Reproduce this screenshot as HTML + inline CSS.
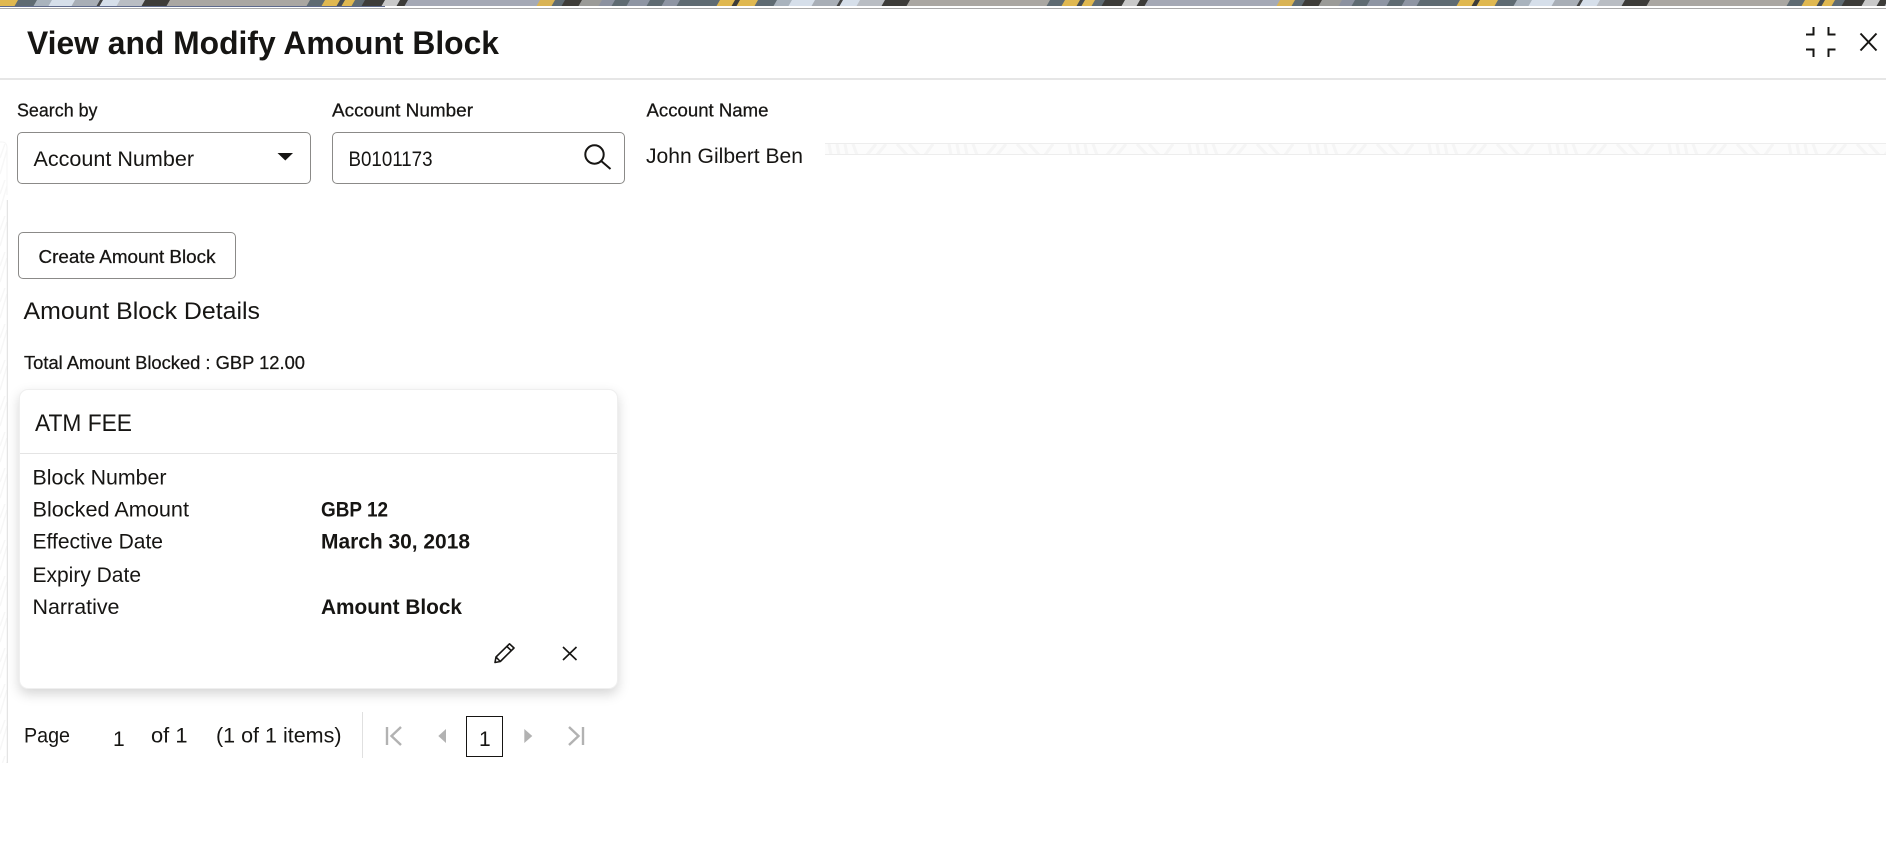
<!DOCTYPE html>
<html lang="en">
<head>
<meta charset="utf-8">
<title>View and Modify Amount Block</title>
<style>
html,body{margin:0;padding:0;background:#fff;width:1886px;height:862px;overflow:hidden}
body{position:relative;font-family:"Liberation Sans",sans-serif;color:#161513}
.box{position:absolute;box-sizing:border-box}
.field{border:1px solid #8b8a88;border-radius:5px;background:#fff}
svg.layer{position:absolute;left:0;top:0}
svg text{font-family:"Liberation Sans",sans-serif;fill:#161513}
.b{font-weight:700}
.m{stroke:#161513;stroke-width:.25}
</style>
</head>
<body>
<div class="box" style="left:0;top:6px;width:385px;height:1.4px;background:#5e6a8c"></div>
<div class="box" style="left:0;top:7.5px;width:1886px;height:1px;background:#a9a9a9"></div>
<div class="box" style="left:0;top:78px;width:1886px;height:2px;background:#e6e6e6"></div>
<div class="box field" style="left:17px;top:132px;width:294px;height:52px"></div>
<div class="box field" style="left:332px;top:132px;width:293px;height:52px"></div>
<div class="box field" style="left:18px;top:232px;width:218px;height:47px"></div>
<div class="box" style="left:18.5px;top:389px;width:599.5px;height:300px;border-radius:9px;background:#fff;border:1px solid #efefef;box-shadow:0 5px 12px rgba(0,0,0,.17)"></div>
<div class="box" style="left:19.5px;top:453px;width:597.5px;height:1px;background:#e4e4e4"></div>
<div class="box" style="left:362px;top:712px;width:1px;height:46px;background:#e0e0e0"></div>
<div class="box" style="left:466px;top:716px;width:37px;height:41px;border:1.3px solid #161513"></div>

<svg class="layer" width="1886" height="862" viewBox="0 0 1886 862" xmlns="http://www.w3.org/2000/svg">
<defs>
<pattern id="ban" patternUnits="userSpaceOnUse" width="740" height="6" patternTransform="skewX(-30)">
<rect width="740" height="6" fill="#aaa7a2"/>
<rect x="0" width="18" height="6" fill="#e0b850"/>
<rect x="18" width="19" height="6" fill="#5f6b72"/>
<rect x="37" width="15" height="6" fill="#a9b3bd"/>
<rect x="52" width="23" height="6" fill="#d6dfea"/>
<rect x="75" width="25" height="6" fill="#a8aeb6"/>
<rect x="100" width="3" height="6" fill="#444"/>
<rect x="103" width="17" height="6" fill="#d6dfea"/>
<rect x="120" width="25" height="6" fill="#b9bdc3"/>
<rect x="145" width="25" height="6" fill="#3d3c39"/>
<rect x="310" width="15" height="6" fill="#5f6b72"/>
<rect x="325" width="15" height="6" fill="#e0b850"/>
<rect x="340" width="5" height="6" fill="#4a4f52"/>
<rect x="345" width="10" height="6" fill="#e0b850"/>
<rect x="355" width="10" height="6" fill="#5f6b72"/>
<rect x="365" width="20" height="6" fill="#3d3c39"/>
<rect x="385" width="15" height="6" fill="#c9c9c9"/>
<rect x="400" width="8" height="6" fill="#3d3c39"/>
<rect x="408" width="132" height="6" fill="#a5a9b5"/>
<rect x="540" width="15" height="6" fill="#d9b354"/>
<rect x="555" width="10" height="6" fill="#5f6b72"/>
<rect x="565" width="17" height="6" fill="#3f3d39"/>
<rect x="582" width="20" height="6" fill="#9b9b98"/>
<rect x="602" width="13" height="6" fill="#8c92a0"/>
<rect x="615" width="15" height="6" fill="#5f6b72"/>
<rect x="630" width="20" height="6" fill="#8e95a3"/>
<rect x="650" width="15" height="6" fill="#5f6b72"/>
<rect x="665" width="15" height="6" fill="#8e95a3"/>
<rect x="680" width="40" height="6" fill="#5f6b72"/>
<rect x="720" width="15" height="6" fill="#e0b850"/>
<rect x="735" width="5" height="6" fill="#3d3c39"/>
</pattern>
<pattern id="strip" patternUnits="userSpaceOnUse" width="120" height="11" patternTransform="translate(825 144)">
<rect width="120" height="11" fill="#fcfcfc"/>
<path d="M4 0l2 11M12 0l2 11M20 0l2 11M28 0l4 11M42 11l9-11M52 11l9-11M72 0l10 11M84 0l10 11M100 11l8-11" stroke="#f5f5f5" stroke-width="3" fill="none"/>
</pattern>
<pattern id="side" patternUnits="userSpaceOnUse" width="7" height="36">
<path d="M0 30L7 6M0 14L7 -6" stroke="#f7f7f7" stroke-width="1.5" fill="none"/>
</pattern>
</defs>

<rect x="0" y="0" width="1886" height="6" fill="url(#ban)"/>

<rect x="825" y="143.5" width="1061" height="11.5" fill="url(#strip)"/>
<path d="M825 143.5H1886M825 154.5H1886" stroke="#ededed" stroke-width="1"/>

<path d="M0 142H2Q7 142 7 148V763H0Z" fill="url(#side)"/>
<path d="M0 142H2Q7 142 7 148V195" stroke="#f6f6f6" fill="none"/>
<path d="M7.3 200V763" stroke="#dedede" stroke-width="1" fill="none"/>

<text class="b" x="27" y="54" font-size="32" textLength="472" lengthAdjust="spacingAndGlyphs">View and Modify Amount Block</text>

<path d="M1806 34.5h7.5V27M1828.5 27v7.5h7M1806 49.5h7.5V57M1828.5 57v-7.5h7" fill="none" stroke="#161513" stroke-width="2"/>
<path d="M1860.5 33.5L1876.5 50.5M1876.5 33.5L1860.5 50.5" fill="none" stroke="#161513" stroke-width="2"/>

<text class="m" x="17" y="116.5" font-size="18" textLength="80.5" lengthAdjust="spacingAndGlyphs">Search by</text>
<text class="m" x="332" y="116.5" font-size="18" textLength="141" lengthAdjust="spacingAndGlyphs">Account Number</text>
<text class="m" x="646.5" y="116.5" font-size="18" textLength="122" lengthAdjust="spacingAndGlyphs">Account Name</text>

<text x="33.5" y="166" font-size="21" textLength="160.5" lengthAdjust="spacingAndGlyphs">Account Number</text>
<polygon points="277.5,153 293,153 285.3,160.5" fill="#161513"/>

<text x="348.5" y="166" font-size="21" textLength="84" lengthAdjust="spacingAndGlyphs">B0101173</text>
<circle cx="594.5" cy="154.5" r="9.2" fill="none" stroke="#161513" stroke-width="2"/>
<path d="M601.2 161L610.5 169" fill="none" stroke="#161513" stroke-width="2"/>

<text x="646" y="163" font-size="21" textLength="157" lengthAdjust="spacingAndGlyphs">John Gilbert Ben</text>

<text class="m" x="38.5" y="263" font-size="18" textLength="177" lengthAdjust="spacingAndGlyphs">Create Amount Block</text>
<text x="23.5" y="319" font-size="24" textLength="236.5" lengthAdjust="spacingAndGlyphs">Amount Block Details</text>
<text class="m" x="24" y="369" font-size="18" textLength="281" lengthAdjust="spacingAndGlyphs">Total Amount Blocked : GBP 12.00</text>
<text x="35" y="431" font-size="24" textLength="97" lengthAdjust="spacingAndGlyphs">ATM FEE</text>

<text x="32.5" y="484.5" font-size="21" textLength="134" lengthAdjust="spacingAndGlyphs">Block Number</text>
<text x="32.5" y="516.7" font-size="21" textLength="156.5" lengthAdjust="spacingAndGlyphs">Blocked Amount</text>
<text x="32.5" y="548.5" font-size="21" textLength="130.5" lengthAdjust="spacingAndGlyphs">Effective Date</text>
<text x="32.5" y="582" font-size="21" textLength="108.5" lengthAdjust="spacingAndGlyphs">Expiry Date</text>
<text x="32.5" y="614" font-size="21" textLength="87" lengthAdjust="spacingAndGlyphs">Narrative</text>

<text class="b" x="321" y="516.7" font-size="21" textLength="67" lengthAdjust="spacingAndGlyphs">GBP 12</text>
<text class="b" x="321" y="548.5" font-size="21" textLength="149" lengthAdjust="spacingAndGlyphs">March 30, 2018</text>
<text class="b" x="321" y="614" font-size="21" textLength="141" lengthAdjust="spacingAndGlyphs">Amount Block</text>

<path d="M495 662.5L496 657L509.5 643.8L514 648L500.3 661.5ZM496 657L500.3 661.5M507 646.5L511.3 650.7" fill="none" stroke="#161513" stroke-width="1.6" stroke-linejoin="round"/>
<path d="M563 647L576.5 660M576.5 647L563 660" fill="none" stroke="#161513" stroke-width="1.6"/>

<text x="24" y="742.7" font-size="21" textLength="46" lengthAdjust="spacingAndGlyphs">Page</text>
<text x="113" y="746" font-size="21">1</text>
<text x="151" y="742.7" font-size="21" textLength="36.5" lengthAdjust="spacingAndGlyphs">of 1</text>
<text x="216" y="742.7" font-size="21" textLength="125.5" lengthAdjust="spacingAndGlyphs">(1 of 1 items)</text>

<path d="M387 727V745M401 727L391.5 736L401 745" fill="none" stroke="#b2b2b2" stroke-width="2.4"/>
<polygon points="446,729 438.3,736 446,743" fill="#b2b2b2"/>
<text x="479" y="746" font-size="21">1</text>
<polygon points="524.3,729 532.3,736 524.3,743" fill="#b2b2b2"/>
<path d="M569 727L578.5 736L569 745M583 727V745" fill="none" stroke="#b2b2b2" stroke-width="2.4"/>
</svg>
</body>
</html>
